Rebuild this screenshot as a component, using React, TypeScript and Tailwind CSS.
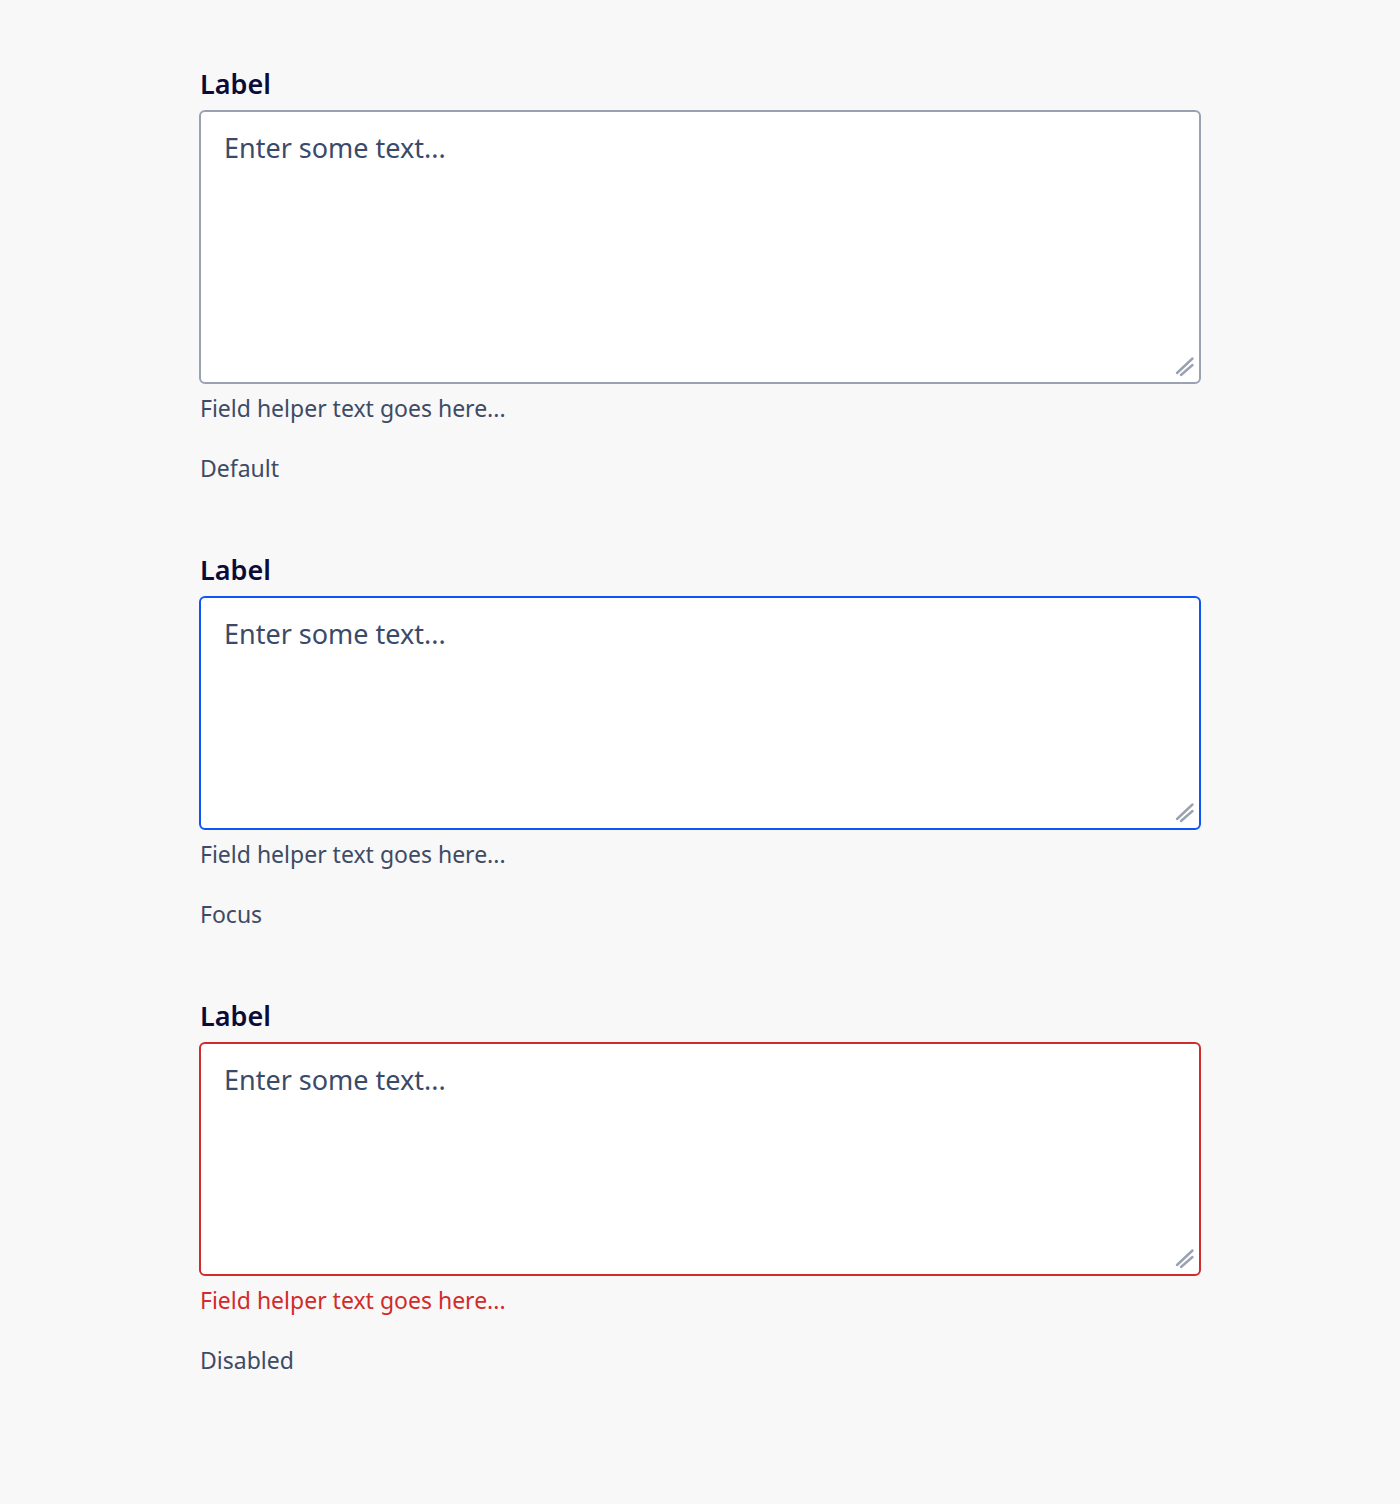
const states = [
  { name: "Default", border: "border-[#9aa1b1]", helper: "text-[#3d4b66]", height: "h-[274px]" },
  { name: "Focus", border: "border-[#0f55f5]", helper: "text-[#3d4b66]", height: "h-[234px]" },
  { name: "Disabled", border: "border-[#d22b2b]", helper: "text-[#d22b2b]", height: "h-[234px]" },
];

function Grip() {
  return (
    <svg className="absolute right-0 bottom-0 pointer-events-none" width="28" height="28" viewBox="0 0 28 28" fill="none">
      <path d="M4 17 L19.5 2.5" stroke="#9aa1b1" strokeWidth="2.4" strokeLinecap="round" />
      <path d="M8 19 L19.5 9" stroke="#9aa1b1" strokeWidth="2.4" strokeLinecap="round" />
    </svg>
  );
}

export default function App() {
  return (
    <div
      className="min-h-[1504px] bg-[#f8f8f8] pt-[68px] pl-[200px]"
      style={{ fontFamily: '"Noto Sans", "Open Sans", sans-serif' }}
    >
      <div className="flex flex-col w-[1000px]">
        {states.map((s, i) => (
          <div key={s.name} className={i > 0 ? "mt-[71px] flex flex-col" : "flex flex-col"}>
            <label className="text-[27px] leading-[32px] font-semibold text-[#0b0b38]">Label</label>
            <div className="relative mt-[10px] -ml-px w-[1002px]">
              <textarea
                placeholder="Enter some text..."
                className={`block w-full ${s.height} rounded-[6px] border-2 ${s.border} bg-white px-[23px] pt-[18px] text-[27px] leading-[36px] text-[#3b4a68] placeholder:text-[#3b4a68] outline-none resize-none`}
              />
              <Grip />
            </div>
            <p className={`mt-[9px] text-[23px] leading-[30px] ${s.helper}`}>Field helper text goes here...</p>
            <p className="mt-[30px] text-[23px] leading-[30px] text-[#3d4b66]">{s.name}</p>
          </div>
        ))}
      </div>
    </div>
  );
}
